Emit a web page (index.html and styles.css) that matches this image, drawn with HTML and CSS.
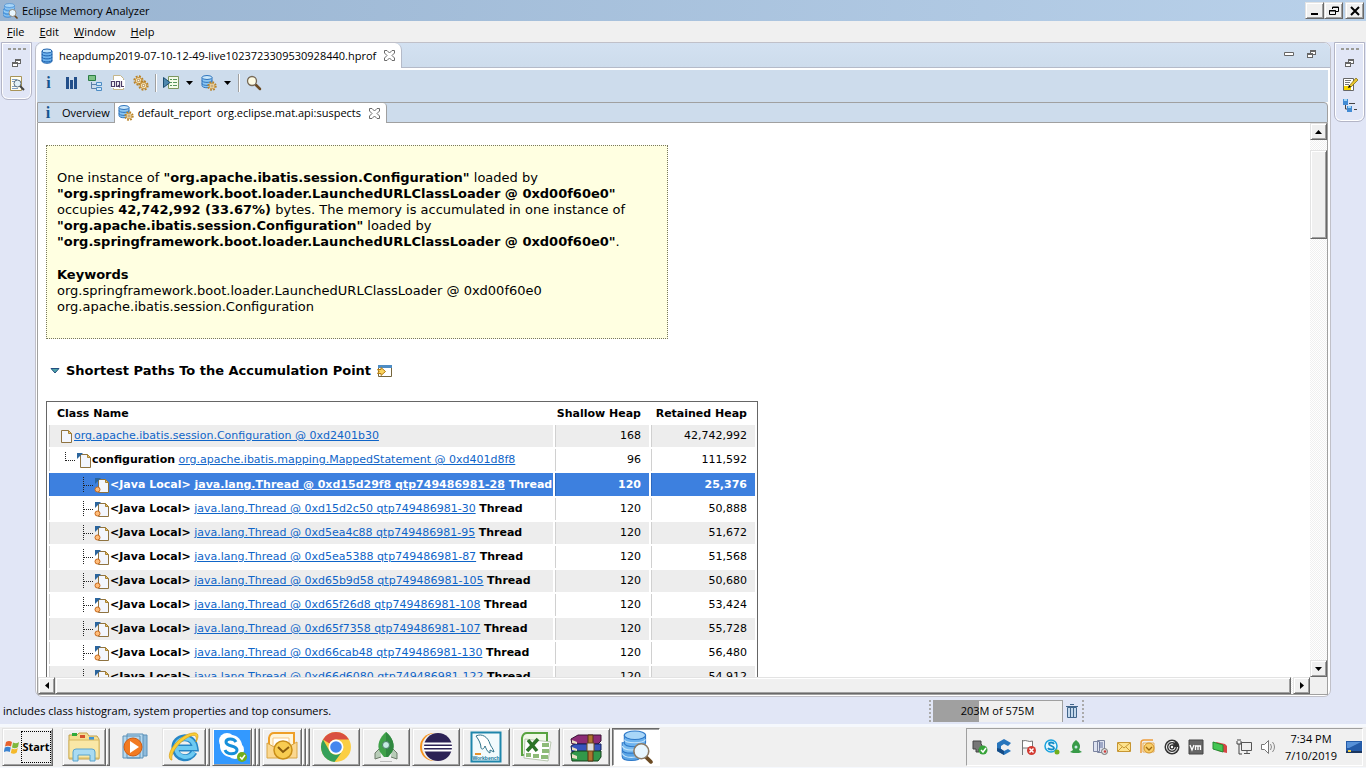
FILE: index.html
```html
<!DOCTYPE html>
<html lang="en">
  <head>
    <meta charset="utf-8" />
    <meta name="viewport" content="width=device-width, initial-scale=1.0" />
    <title>Eclipse Memory Analyzer</title>
    <link rel="stylesheet" href="styles.css" />
  </head>

  <body>
    <!-- shared icons -->
    <svg class="sprite" aria-hidden="true">
      <symbol id="i-db" viewBox="0 0 16 16">
        <path d="M3 3v10c0 3 10 3 10 0V3z" fill="#6db3ee" stroke="#1f62ad" />
        <ellipse cx="8" cy="3" rx="5" ry="2" fill="#b9e0fb" stroke="#1f62ad" />
        <path d="M3 6c0 2.500 10 2.500 10 0M3 9c0 2.500 10 2.500 10 0M3 12c0 2.500 10 2.500 10 0" fill="none" stroke="#1f62ad" />
      </symbol>
      <symbol id="i-gear" viewBox="0 0 16 16">
        <circle cx="8" cy="8" r="6" fill="none" stroke="#b98328" stroke-width="3" stroke-dasharray="2.700 2" />
        <circle cx="8" cy="8" r="4.500" fill="#fdecc0" stroke="#c99642" stroke-width="1.500" />
        <circle cx="8" cy="8" r="1.800" fill="#fff" stroke="#8a5a10" />
      </symbol>
      <symbol id="i-lens" viewBox="0 0 16 16">
        <path d="M10 10l4 4" stroke="#6b4a22" stroke-width="2.500" stroke-linecap="round" />
        <circle cx="6" cy="6" r="4.500" fill="#fdfbe4" stroke="#776a58" stroke-width="1.300" />
      </symbol>
      <symbol id="i-dbgear" viewBox="0 0 16 16">
        <path d="M1 2.500v8c0 3 10 3 10 0v-8z" fill="#8cc6f2" stroke="#2e74bd" />
        <ellipse cx="6" cy="2.500" rx="5" ry="2" fill="#cbe8fb" stroke="#2e74bd" />
        <path d="M1 5.500c0 2.500 10 2.500 10 0M1 8.500c0 2.500 10 2.500 10 0" fill="none" stroke="#2e74bd" />
        <use href="#i-gear" x="6" y="6" width="10" height="10" />
      </symbol>
      <symbol id="i-mat" viewBox="0 0 32 32">
        <path d="M3 19v6c0 5 17 5 17 0v-6z" fill="#5aa5e6" stroke="#2d78c8" />
        <path d="M3 12v6c0 5 17 5 17 0v-6z" fill="#79bbef" stroke="#2d78c8" />
        <path d="M5 5v7c0 5 20 5 20 0V5z" fill="#6db3ee" stroke="#2d78c8" />
        <ellipse cx="15" cy="5" rx="10" ry="4" fill="#a9d6f8" stroke="#2d78c8" />
        <path d="M5 9c1 4 18 4 20 0M3 15c2 5 15 5 17 0M3 22c2 5 15 5 17 0" fill="none" stroke="#c6e5fb" />
        <path d="M25 25l5 5" stroke="#6b4a22" stroke-width="3.500" stroke-linecap="round" />
        <circle cx="21" cy="20" r="7" fill="#e8f6fe" stroke="#8b7a64" stroke-width="1.500" />
      </symbol>
      <symbol id="i-restore" viewBox="0 0 9 8">
        <path d="M3 0h6v5H6v3H0V3h3z" fill="#666" />
        <path d="M4 2h4v2H6V3H4zM1 5h4v2H1z" fill="#fff" />
      </symbol>
      <symbol id="i-close" viewBox="0 0 11 11">
        <path d="M.5.5h2.500l2.500 2.500L8 .5h2.500V3L8 5.500 10.500 8v2.500H8L5.500 8 3 10.500H.5V8L3 5.500.5 3z" fill="#fff" stroke="#6b6b6b" />
      </symbol>
      <symbol id="i-tree" viewBox="0 0 16 16">
        <path d="M4.500 7v6.500H9M4.500 9.500H9" fill="none" stroke="#5d7fa8" />
        <path d="M1.500.5h7v5h-7z" fill="#7cc286" stroke="#2b7c44" />
        <path d="M9.500 7.500h5v3h-5zM9.500 12.500h5v3h-5z" fill="#cfe6fa" stroke="#4d8cc4" />
      </symbol>
      <symbol id="i-page" viewBox="0 0 16 16">
        <path d="M3.500 2.500h7l3 3v9h-10z" fill="#f3f6fd" stroke="#8f7340" />
        <path d="M10.500 2.500l3 3h-3z" fill="#e8c777" stroke="#a98232" />
      </symbol>
      <symbol id="i-ref" viewBox="0 0 16 16">
        <path d="M4.500 2.500h7l3 3v10h-10z" fill="#f3f6fd" stroke="#8f7340" />
        <path d="M11.500 2.500l3 3h-3z" fill="#e8c777" stroke="#a98232" />
        <path d="M1 1h6L1 7z" fill="#2b659d" />
      </symbol>
      <symbol id="i-local" viewBox="0 0 16 16">
        <use href="#i-ref" width="16" height="16" />
        <circle cx="3.500" cy="12.500" r="2.500" fill="#ffbd7a" stroke="#c8691b" />
      </symbol>
      <symbol id="i-branch" viewBox="0 0 18 16">
        <path d="M7.500 0v16M8 8.500h10" fill="none" stroke="#222" stroke-dasharray="1 1" />
      </symbol>
      <symbol id="i-elbow" viewBox="0 0 18 16">
        <path d="M7.500 0v9M8 8.500h10" fill="none" stroke="#222" stroke-dasharray="1 1" />
      </symbol>
    </svg>

    <header class="titlebar">
      <svg width="16" height="16"><use href="#i-mat" /></svg>
      <h1>Eclipse Memory Analyzer</h1>
      <div class="window-buttons">
        <button class="raised" aria-label="Minimize"><svg width="12" height="10"><path d="M2 7h7v2H2z" /></svg></button>
        <button class="raised" aria-label="Restore"><svg width="12" height="10" viewBox="0 0 12 10"><path d="M4.500 3V1h6v4.500H8M1.500 4.500h6v4h-6zM4 1.500h7M1 5h7" fill="none" stroke="#000" /></svg></button>
        <button class="raised close" aria-label="Close"><svg width="12" height="10"><path d="M2 1l8 8M10 1L2 9" stroke="#000" stroke-width="2" /></svg></button>
      </div>
    </header>

    <nav class="menubar">
      <a href="#"><u>F</u>ile</a>
      <a href="#"><u>E</u>dit</a>
      <a href="#"><u>W</u>indow</a>
      <a href="#"><u>H</u>elp</a>
    </nav>

    <main class="workbench">
      <aside class="trim trim-left">
        <span class="grip"></span>
        <button aria-label="Restore view"><svg width="9" height="8"><use href="#i-restore" /></svg></button>
        <button aria-label="Inspector">
          <svg width="16" height="16" viewBox="0 0 16 16">
            <path d="M1.500.5h11v14h-11z" fill="#fffef2" stroke="#a89458" />
            <path d="M3 3.500h5M3 5.500h3M3 10.500h3M3 12.500h6" stroke="#7f9fc4" />
            <circle cx="8.500" cy="7.500" r="3.500" fill="#e2f1f8" stroke="#5c6c7a" />
            <path d="M11 10l4 4" stroke="#444" stroke-width="2" />
          </svg>
        </button>
      </aside>

      <section class="editor">
        <div class="editor-tabs">
          <div class="editor-tab">
            <svg width="16" height="16"><use href="#i-db" /></svg>
            <span>heapdump2019-07-10-12-49-live1023723309530928440.hprof</span>
            <button aria-label="Close tab"><svg width="11" height="11"><use href="#i-close" /></svg></button>
          </div>
          <div class="editor-tools">
            <button aria-label="Minimize"><svg width="10" height="4"><path d="M.5.5h9v3h-9z" fill="#fff" stroke="#666" /></svg></button>
            <button aria-label="Restore"><svg width="9" height="8"><use href="#i-restore" /></svg></button>
          </div>
        </div>

        <div class="toolbar">
          <button class="info" aria-label="Overview">i</button>
          <button aria-label="Histogram"><svg width="16" height="16"><path d="M2 2h3v12H2zM6 5h3v9H6zM10 2h3v12h-3z" fill="#234f8a" /></svg></button>
          <button aria-label="Dominator tree"><svg width="16" height="16"><use href="#i-tree" /></svg></button>
          <button aria-label="OQL">
            <svg width="16" height="16" viewBox="0 0 16 16">
              <path d="M3.500.5h7l3 3v11h-10z" fill="#fff" stroke="#c5b68a" />
              <path d="M1 5h14v8H1z" fill="#fff" />
              <path d="M1.500 6.500h3v5h-3zM6.500 6.500h3v5h-3zM8 10l2 2.500M11.500 6v5.500H14" fill="none" stroke="#4d3d66" stroke-width="1.200" />
            </svg>
          </button>
          <button aria-label="Thread overview"><svg width="16" height="16"><use href="#i-gear" width="11" height="11" /><use href="#i-gear" x="5" y="5" width="11" height="11" /></svg></button>
          <span class="separator"></span>
          <button aria-label="Run report">
            <svg width="16" height="16" viewBox="0 0 16 16">
              <path d="M5.500 1.500h10v12h-10z" fill="#f4fbe8" stroke="#7d9660" />
              <path d="M7 4.500h2M10 4.500h4M7 7.500h2M10 7.500h4M7 10.500h2M10 10.500h4" stroke="#57965c" />
              <path d="M.5 2.500v10L7 7.500z" fill="#4e88ae" stroke="#1c4d70" />
            </svg>
          </button>
          <button class="drop" aria-label="Reports menu"><svg width="8" height="4"><path d="M0 0h7L3.500 4z" /></svg></button>
          <button aria-label="Query browser"><svg width="16" height="16"><use href="#i-dbgear" /></svg></button>
          <button class="drop" aria-label="Queries menu"><svg width="8" height="4"><path d="M0 0h7L3.500 4z" /></svg></button>
          <span class="separator"></span>
          <button aria-label="Find object"><svg width="16" height="16"><use href="#i-lens" /></svg></button>
        </div>

        <div class="page-tabs">
          <button class="page-tab"><b class="info">i</b><span>Overview</span></button>
          <div class="page-tab active">
            <svg width="16" height="16"><use href="#i-dbgear" /></svg>
            <span>default_report&nbsp; org.eclipse.mat.api:suspects</span>
            <button aria-label="Close page"><svg width="11" height="11"><use href="#i-close" /></svg></button>
          </div>
        </div>

        <div class="browser">
          <article class="report">
            <div class="suspect">
              <p>
                One instance of <b>"org.apache.ibatis.session.Configuration"</b> loaded by<br />
                <b>"org.springframework.boot.loader.LaunchedURLClassLoader @ 0xd00f60e0"</b><br />
                occupies <b>42,742,992 (33.67%)</b> bytes. The memory is accumulated in one instance of<br />
                <b>"org.apache.ibatis.session.Configuration"</b> loaded by<br />
                <b>"org.springframework.boot.loader.LaunchedURLClassLoader @ 0xd00f60e0"</b>.
              </p>
              <p>
                <b>Keywords</b><br />
                org.springframework.boot.loader.LaunchedURLClassLoader @ 0xd00f60e0<br />
                org.apache.ibatis.session.Configuration
              </p>
            </div>

            <h2>
              <svg width="10" height="6"><path d="M1 .5h8L5 5z" fill="#4ba3a8" stroke="#234f80" /></svg>
              <span>Shortest Paths To the Accumulation Point</span>
              <svg width="16" height="14" viewBox="0 0 16 14">
                <path d="M1.500 1.500h13v11h-13z" fill="#fff" stroke="#75653c" />
                <path d="M1 1h14v3H1z" fill="#4d8cc4" />
                <path d="M.5 5.500H4v-2l4.500 4L4 11.500v-2H.5l1.500-2z" fill="#fbd35c" stroke="#b27b14" />
              </svg>
            </h2>

            <table class="paths">
              <thead>
                <tr><th>Class Name</th><th class="num">Shallow Heap</th><th class="num">Retained Heap</th></tr>
              </thead>
              <tbody>
                <tr>
                  <td><div class="node"><svg width="16" height="16"><use href="#i-page" /></svg><span><a href="#">org.apache.ibatis.session.Configuration @ 0xd2401b30</a></span></div></td>
                  <td class="num">168</td><td class="num">42,742,992</td>
                </tr>
                <tr>
                  <td><div class="node"><svg width="18" height="16"><use href="#i-elbow" /></svg><svg width="16" height="16"><use href="#i-ref" /></svg><span><b>configuration</b> <a href="#">org.apache.ibatis.mapping.MappedStatement @ 0xd401d8f8</a></span></div></td>
                  <td class="num">96</td><td class="num">111,592</td>
                </tr>
                <tr class="selected">
                  <td><div class="node local"><svg width="18" height="16"><use href="#i-branch" /></svg><svg width="16" height="16"><use href="#i-local" /></svg><span><b>&lt;Java Local&gt;</b> <a href="#">java.lang.Thread @ 0xd15d29f8 qtp749486981-28</a> <b>Thread</b></span></div></td>
                  <td class="num">120</td><td class="num">25,376</td>
                </tr>
                <tr>
                  <td><div class="node local"><svg width="18" height="16"><use href="#i-branch" /></svg><svg width="16" height="16"><use href="#i-local" /></svg><span><b>&lt;Java Local&gt;</b> <a href="#">java.lang.Thread @ 0xd15d2c50 qtp749486981-30</a> <b>Thread</b></span></div></td>
                  <td class="num">120</td><td class="num">50,888</td>
                </tr>
                <tr>
                  <td><div class="node local"><svg width="18" height="16"><use href="#i-branch" /></svg><svg width="16" height="16"><use href="#i-local" /></svg><span><b>&lt;Java Local&gt;</b> <a href="#">java.lang.Thread @ 0xd5ea4c88 qtp749486981-95</a> <b>Thread</b></span></div></td>
                  <td class="num">120</td><td class="num">51,672</td>
                </tr>
                <tr>
                  <td><div class="node local"><svg width="18" height="16"><use href="#i-branch" /></svg><svg width="16" height="16"><use href="#i-local" /></svg><span><b>&lt;Java Local&gt;</b> <a href="#">java.lang.Thread @ 0xd5ea5388 qtp749486981-87</a> <b>Thread</b></span></div></td>
                  <td class="num">120</td><td class="num">51,568</td>
                </tr>
                <tr>
                  <td><div class="node local"><svg width="18" height="16"><use href="#i-branch" /></svg><svg width="16" height="16"><use href="#i-local" /></svg><span><b>&lt;Java Local&gt;</b> <a href="#">java.lang.Thread @ 0xd65b9d58 qtp749486981-105</a> <b>Thread</b></span></div></td>
                  <td class="num">120</td><td class="num">50,680</td>
                </tr>
                <tr>
                  <td><div class="node local"><svg width="18" height="16"><use href="#i-branch" /></svg><svg width="16" height="16"><use href="#i-local" /></svg><span><b>&lt;Java Local&gt;</b> <a href="#">java.lang.Thread @ 0xd65f26d8 qtp749486981-108</a> <b>Thread</b></span></div></td>
                  <td class="num">120</td><td class="num">53,424</td>
                </tr>
                <tr>
                  <td><div class="node local"><svg width="18" height="16"><use href="#i-branch" /></svg><svg width="16" height="16"><use href="#i-local" /></svg><span><b>&lt;Java Local&gt;</b> <a href="#">java.lang.Thread @ 0xd65f7358 qtp749486981-107</a> <b>Thread</b></span></div></td>
                  <td class="num">120</td><td class="num">55,728</td>
                </tr>
                <tr>
                  <td><div class="node local"><svg width="18" height="16"><use href="#i-branch" /></svg><svg width="16" height="16"><use href="#i-local" /></svg><span><b>&lt;Java Local&gt;</b> <a href="#">java.lang.Thread @ 0xd66cab48 qtp749486981-130</a> <b>Thread</b></span></div></td>
                  <td class="num">120</td><td class="num">56,480</td>
                </tr>
                <tr>
                  <td><div class="node local"><svg width="18" height="16"><use href="#i-branch" /></svg><svg width="16" height="16"><use href="#i-local" /></svg><span><b>&lt;Java Local&gt;</b> <a href="#">java.lang.Thread @ 0xd66d6080 qtp749486981-122</a> <b>Thread</b></span></div></td>
                  <td class="num">120</td><td class="num">54,912</td>
                </tr>
              </tbody>
            </table>
          </article>

          <div class="scroll vertical">
            <button class="raised" aria-label="Scroll up"><svg width="8" height="4"><path d="M0 4h7L3.500 0z" /></svg></button>
            <div class="raised thumb"></div>
            <button class="raised end" aria-label="Scroll down"><svg width="8" height="4"><path d="M0 0h7L3.500 4z" /></svg></button>
          </div>
          <div class="scroll horizontal">
            <button class="raised" aria-label="Scroll left"><svg width="4" height="8"><path d="M4 0v7L0 3.500z" /></svg></button>
            <div class="raised thumb"></div>
            <button class="raised end" aria-label="Scroll right"><svg width="4" height="8"><path d="M0 0v7l4-3.500z" /></svg></button>
          </div>
          <div class="corner"></div>
        </div>
      </section>

      <aside class="trim trim-right">
        <span class="grip"></span>
        <button aria-label="Restore view"><svg width="9" height="8"><use href="#i-restore" /></svg></button>
        <button aria-label="Notes">
          <svg width="16" height="16" viewBox="0 0 16 16">
            <path d="M1.500 2.500h10v12h-10z" fill="#fff" stroke="#666" />
            <path d="M3 4.500h6M3 6.500h5M3 8.500h4" stroke="#777" />
            <path d="M2 10h7v4H2z" fill="#f5d400" />
            <path d="M7 10l7-8 2 2-7 7z" fill="#e8c62e" stroke="#7a6410" stroke-width=".7" />
            <path d="M6 12l1-3 2 2z" />
          </svg>
        </button>
        <button aria-label="Navigation history">
          <svg width="16" height="16" viewBox="0 0 16 16">
            <path d="M3.500 7v4H6" fill="none" stroke="#444" />
            <path d="M1 1h5v6H1zM5 8h5v6H5z" fill="#438bd4" />
            <path d="M2 1h3v2H2zM6 8h3v2H6z" fill="#9fd6f5" />
            <path d="M7 5.500h6M12 11.500h3" stroke="#444" />
          </svg>
        </button>
      </aside>
    </main>

    <footer class="statusline">
      <span class="message">includes class histogram, system properties and top consumers.</span>
      <div class="heap">
        <div class="heap-meter">
          <div class="heap-used" style="width: 36%"></div>
          <span>203M of 575M</span>
        </div>
        <button aria-label="Run garbage collector">
          <svg width="12" height="16" viewBox="0 0 12 16">
            <path d="M1.500 4.500h9v10h-9z" fill="#c4d8ec" stroke="#42668c" />
            <path d="M0 3.500h12M4 1.500h4M4.500 5v9M7.500 5v9" stroke="#42668c" />
          </svg>
        </button>
      </div>
    </footer>

    <div class="taskbar">
      <button class="start raised">
        <svg width="16" height="16" viewBox="0 0 16 16">
          <path d="M2 3c2-1.500 4-1.500 6 0L7 7.500c-2-1-4-1-6 0z" fill="#e8622c" />
          <path d="M9 3.500c2 1 4 1 6-.5l-1 5c-2 1.500-4 1.500-6 .5z" fill="#7fb83c" />
          <path d="M.8 8.500c2-1 4-1 6 0l-1 4.500c-2-1-4-1-6 0z" fill="#3b83d0" />
          <path d="M7.800 9.500c2 1 4 1 6-.5l-1 4.500c-2 1.500-4 1.500-6 .5z" fill="#f4b92b" />
        </svg>
        <span>Start</span>
      </button>

      <div class="tasks">
        <div class="task">
          <button class="raised" aria-label="Explorer">
            <svg width="34" height="34" viewBox="0 0 34 34">
              <path d="M2 5h8l2-2h8l2 3h8l2 3v20H2z" fill="#f4de91" stroke="#c3a04b" />
              <path d="M5 3h5v3H5z" fill="#2faa3b" /><path d="M13 5h5v3h-5z" fill="#d4512a" /><path d="M22 7h5v3h-5z" fill="#3d94d8" />
              <path d="M2 10h30v18H2z" fill="#f9e7a6" stroke="#d6b860" />
              <path d="M6 31v-9q0-3 3-3h16q3 0 3 3v9h-5v-6H11v6z" fill="#a9dbf2" stroke="#5ba4cd" />
            </svg>
          </button>
          <i class="edge"></i>
        </div>
        <div class="task flat">
          <button aria-label="Media Player">
            <svg width="30" height="30" viewBox="0 0 30 30">
              <path d="M10 3h16v21H10z" fill="#8fbbdb" stroke="#5d91b8" />
              <path d="M6 2h16v24H6zM2 4h17v22H2z" fill="#b6d8ee" stroke="#5d91b8" />
              <circle cx="12" cy="15" r="9" fill="#f27a21" stroke="#d35b10" />
              <path d="M9 9l9 6-9 6z" fill="#fff" />
            </svg>
          </button>
        </div>
        <div class="task">
          <button class="raised" aria-label="Internet Explorer">
            <svg width="34" height="34" viewBox="0 0 34 34">
              <path d="M27 22c-5 9-18 7-19-4-1-12 18-15 20 0H10" fill="none" stroke="#2786c5" stroke-width="7" />
              <path d="M27 22c-5 8-17 6-18-4-1-11 17-14 19 0H10" fill="none" stroke="#6dcaf2" stroke-width="4" />
              <path d="M4 30C-3 24 13 4 26 3c6-1 6 4 3 9 1-5 0-8-5-6C15 9 3 22 5 30z" fill="#f9cd34" stroke="#d99e16" stroke-width=".7" />
            </svg>
          </button>
          <i class="edge"></i>
        </div>
        <div class="task">
          <button class="raised skype" aria-label="Skype">
            <svg width="34" height="34" viewBox="0 0 34 34">
              <circle cx="12" cy="11" r="8" fill="#fff" /><circle cx="20" cy="20" r="9" fill="#fff" /><circle cx="16" cy="16" r="11" fill="#fff" />
              <path d="M21 12c-2-4-10-4-10 0 0 5 11 3 11 8 0 5-10 5-12 0" fill="none" stroke="#168fda" stroke-width="3" />
              <circle cx="27" cy="27" r="5" fill="#71ae1c" /><path d="M25 27l2 2 3-4" fill="none" stroke="#fff" stroke-width="1.500" />
            </svg>
          </button>
          <i class="edge"></i><i class="edge"></i>
        </div>
        <div class="task">
          <button class="raised" aria-label="Outlook">
            <svg width="34" height="34" viewBox="0 0 34 34">
              <path d="M4 8q1-5 5-5h20v20H4z" fill="#fff5da" stroke="#ee9f28" stroke-width="2" />
              <path d="M8 8h16v10H8z" fill="#fff" stroke="#f5c987" />
              <path d="M2 13l14 8 16-9v16H2z" fill="#fbd890" stroke="#d8a545" />
              <circle cx="18" cy="20" r="9" fill="#f8cc51" stroke="#c98f19" stroke-width="1.500" />
              <path d="M13 17l5 5 6-5" fill="none" stroke="#8a5c0d" stroke-width="2" />
            </svg>
          </button>
          <i class="edge"></i><i class="edge"></i>
        </div>
        <div class="task">
          <button class="raised" aria-label="Chrome">
            <svg width="32" height="32" viewBox="0 0 32 32">
              <circle cx="16" cy="16" r="15" fill="#fbce43" />
              <path d="M3 8.500A15 15 0 0 1 29 8.500H16a7.500 7.500 0 0 0-6.500 4z" fill="#d94f40" />
              <path d="M3 8.500A15 15 0 0 0 14.500 31L22.500 20a7.500 7.500 0 0 1-13 0z" fill="#35a05a" />
              <circle cx="16" cy="16" r="7.500" fill="#fff" /><circle cx="16" cy="16" r="5.800" fill="#4587ee" />
            </svg>
          </button>
        </div>
        <div class="task">
          <button class="raised" aria-label="Rocket">
            <svg width="32" height="32" viewBox="0 0 32 32">
              <path d="M10 17l-5 5v6l6-2M22 17l5 5v6l-6-2" fill="#b8ccb8" stroke="#6d7c6a" />
              <path d="M16 1c6 5 10 13 6 20l-4 5h-4l-4-5C6 14 10 6 16 1z" fill="#3fa149" />
              <path d="M16 1c6 5 10 13 6 20l-4 5h-2z" fill="#308840" />
              <circle cx="16" cy="14" r="3.500" fill="#c5ebe2" stroke="#4a7b68" />
              <path d="M10 30.500h12" stroke="#bbb" />
            </svg>
          </button>
        </div>
        <div class="task">
          <button class="raised" aria-label="Eclipse">
            <svg width="34" height="32" viewBox="0 0 34 32">
              <circle cx="15" cy="16" r="14" fill="#f7941e" /><circle cx="17" cy="16" r="14" fill="#f0f0f0" /><circle cx="19" cy="16" r="14" fill="#2c2255" />
              <path d="M5 12.500h28M5 16h28M5 19.500h28" stroke="#fff" stroke-width="2" />
            </svg>
          </button>
        </div>
        <div class="task">
          <button class="raised" aria-label="MySQL Workbench">
            <svg width="32" height="32" viewBox="0 0 32 32">
              <path d="M1.500 1.500h29v29h-29z" fill="#f2fafc" stroke="#1e86ab" stroke-width="2" />
              <path d="M6 5c6-3 12 1 14 8 1 3 3 4 4 8l-4-2 0 3c-3-1-4-5-5-7-1 3-3 4-4 2 0-4-2-8-5-12z" fill="#fff" stroke="#32748b" />
              <path d="M5 23h6" stroke="#e8912b" stroke-width="2" />
              <text x="16" y="29" text-anchor="middle" class="workbench-label">Workbench</text>
            </svg>
          </button>
        </div>
        <div class="task">
          <button class="raised" aria-label="Excel">
            <svg width="34" height="32" viewBox="0 0 34 32">
              <path d="M3 7q1-5 5-5h20v22H3z" fill="#eff8e7" stroke="#58a340" stroke-width="2" />
              <path d="M6 8l26 3-3 19-24-3z" fill="#fff" stroke="#b8c7b0" />
              <path d="M23 12h7v4h-7zM23 18h7v4h-7zM22 24h7v4h-7zM14 23h6v4h-6zM7 22h5v4H7z" fill="#8ebb78" />
              <path d="M9 9l9 11M19 8L8 20" stroke="#2c7428" stroke-width="3.500" />
            </svg>
          </button>
        </div>
        <div class="task">
          <button class="raised" aria-label="WinRAR">
            <svg width="34" height="32" viewBox="0 0 34 32">
              <path d="M2 8l7-4h23v6l-3 3H3z" fill="#8d2c75" stroke="#381334" /><path d="M2 15l4-2h26v6l-3 2H3z" fill="#3553bd" stroke="#151f58" /><path d="M2 22l4-2h26v6l-3 4H3z" fill="#32984a" stroke="#123f19" />
              <path d="M3 9l5 2v2l-5-1zM3 16l5 2v2l-5-1zM3 23l5 2v3l-5-1z" fill="#e9dfc4" />
              <path d="M19 4h5v26h-5z" fill="#b07330" stroke="#553313" /><path d="M18 12h7v8h-7z" fill="#ddd" stroke="#6c4a20" />
            </svg>
          </button>
        </div>
        <div class="task">
          <button class="pressed" aria-label="Eclipse Memory Analyzer"><svg width="34" height="34"><use href="#i-mat" /></svg></button>
        </div>
      </div>

      <div class="tray">
        <svg width="16" height="16" viewBox="0 0 16 16"><path d="M1 2h8v3l1 1v4H7v3H4v-3H1z" fill="#777" stroke="#444" /><circle cx="11" cy="11" r="4.500" fill="#37a33a" /><path d="M9 11l2 2 3-4" fill="none" stroke="#fff" stroke-width="1.500" /></svg>
        <svg width="16" height="16" viewBox="0 0 16 16"><path d="M8 0l7 4-3 3-4-2-3 2v3l3 2 4-2 3 2-7 4-7-4V4z" fill="#2775bc" /><path d="M1 9l4 1 3 2v4l-7-4z" fill="#154c86" /></svg>
        <svg width="16" height="16" viewBox="0 0 16 16"><path d="M2.500 1v15M2.500 2q3-1 5 0t5 0v7H3" fill="#fff" stroke="#777" /><circle cx="11.500" cy="11.500" r="4.500" fill="#d23a32" /><path d="M9.500 9.500l4 4m0-4l-4 4" stroke="#fff" stroke-width="1.500" /></svg>
        <svg width="16" height="16" viewBox="0 0 16 16"><circle cx="7" cy="7" r="6" fill="#e6f6fd" stroke="#17a2dd" stroke-width="1.500" /><path d="M10 5c-1-2-5-2-5 0s5 2 5 4-5 2-6 0" fill="none" stroke="#138bc5" stroke-width="1.800" /><circle cx="13" cy="13" r="2.500" fill="#71ae1c" /></svg>
        <svg width="16" height="16" viewBox="0 0 16 16"><path d="M8 1c4 3 5 6 3 10l3 2-3 1H5l-3-1 3-2C3 7 4 4 8 1z" fill="#389b48" /><circle cx="8" cy="8" r="1.500" fill="#c5ebe2" /></svg>
        <svg width="16" height="16" viewBox="0 0 16 16"><path d="M1.500 2.500h6v10h-6zM5.500 1.500h7v12h-7z" fill="#dde2f0" stroke="#7b84a0" /><path d="M7 4h4M7 6h4M7 8h4" stroke="#63709e" /><circle cx="12.500" cy="12.500" r="3" fill="#ddd" stroke="#777" /><circle cx="13" cy="12.500" r="1.200" fill="#ce3b3b" /></svg>
        <svg width="16" height="16" viewBox="0 0 16 16"><path d="M1.500 3.500h13v9h-13z" fill="#fde38e" stroke="#c79632" /><path d="M2 4l6 5 6-5M2 12l4-4M14 12l-4-4" fill="none" stroke="#c79632" /></svg>
        <svg width="16" height="16" viewBox="0 0 16 16"><path d="M1 14V4q0-3 3-3h9" fill="none" stroke="#ed9c3a" stroke-width="1.500" /><path d="M3 4h11v9H3z" fill="#fff0cd" stroke="#e0ac60" /><circle cx="9" cy="9" r="5" fill="#f9ce69" stroke="#d39327" /><path d="M6 8l3 3 3-3" fill="none" stroke="#9b6812" stroke-width="1.300" /></svg>
        <svg width="16" height="16" viewBox="0 0 16 16"><circle cx="8" cy="8" r="7.500" fill="#333" /><circle cx="8" cy="8" r="5.500" fill="none" stroke="#fff" stroke-dasharray="28 7" /><circle cx="8" cy="8" r="3.200" fill="none" stroke="#fff" stroke-dasharray="16 4" /><circle cx="8" cy="8" r="1.200" fill="#fff" /></svg>
        <svg width="16" height="16" viewBox="0 0 16 16"><path d="M1 1h14v14H1z" fill="#666" stroke="#444" /><path d="M2 6l2 5 2-5M7.500 11V7h5v4M10 7v4" fill="none" stroke="#fff" stroke-width="1.300" /></svg>
        <svg width="16" height="16" viewBox="0 0 16 16"><path d="M4 3l9 2 2 2v7l-9-2z" fill="#d64545" /><path d="M1 3l10 3v7L1 10z" fill="#44c653" stroke="#238b31" /></svg>
        <svg width="16" height="16" viewBox="0 0 16 16"><path d="M5.500 3.500h10v8h-10zM8 14.500h6M11 12v2" fill="#eee" stroke="#555" /><path d="M1 2v3h4V2M3 5v10h3M2 0v2M4 0v2" fill="none" stroke="#444" /></svg>
        <svg width="16" height="16" viewBox="0 0 16 16"><path d="M1.500 5.500h3l4-4v13l-4-4h-3z" fill="#fff" stroke="#777" /><path d="M10.500 5q2 3 0 6M12.500 3q4 5 0 10" fill="none" stroke="#888" /></svg>
        <time class="clock">7:34 PM<br />7/10/2019</time>
        <button aria-label="Show desktop"><svg width="16" height="14" viewBox="0 0 16 14"><path d="M0 1h16v11H0z" fill="#245ba8" /><path d="M1 2h14L3 8H1z" fill="#5791d8" /><path d="M0 11h16v2H0z" fill="#1a365f" /><path d="M2 10h3v2H2z" fill="#f2cf4a" /></svg></button>
      </div>
    </div>
  </body>
</html>
```

FILE: styles.css
```css
* {
  box-sizing: border-box;
}

body {
  margin: 0;
  height: 100vh;
  display: flex;
  flex-direction: column;
  overflow: hidden;
  background: #e1e6f6;
  color: #000;
  font-family: "Open Sans", "Noto Sans", sans-serif;
  font-size: 11px;
  line-height: 16px;
}

button {
  display: flex;
  align-items: center;
  justify-content: center;
  margin: 0;
  padding: 0;
  border: 0;
  background: none;
  color: inherit;
  font: inherit;
}

svg {
  display: block;
  flex: none;
}

.sprite {
  position: absolute;
  width: 0;
  height: 0;
}

/* classic 3d edge */
.raised {
  background: #f0f0f0;
  border: 1px solid;
  border-color: #e3e3e3 #696969 #696969 #e3e3e3;
  box-shadow: inset 1px 1px #fff, inset -1px -1px #a0a0a0;
}

/* title and menu */
.titlebar {
  display: flex;
  align-items: center;
  gap: 4px;
  height: 21px;
  padding: 0 2px;
  background: linear-gradient(90deg, #99b4d1, #b9d1ea);
}

.titlebar h1 {
  flex: 1;
  margin: 0;
  font-size: 11px;
  font-weight: normal;
}

.window-buttons {
  display: flex;
}

.window-buttons button {
  width: 19px;
  height: 17px;
}

.window-buttons .close {
  margin-left: 2px;
}

.menubar {
  display: flex;
  align-items: center;
  gap: 15px;
  height: 21px;
  padding: 0 7px;
  background: #f0f0f0;
}

.menubar a {
  color: #000;
  text-decoration: none;
}

/* workbench */
.workbench {
  flex: 1;
  min-height: 0;
  display: flex;
  align-items: flex-start;
  gap: 3px;
  padding: 0 1px;
}

.trim {
  flex: none;
  display: flex;
  flex-direction: column;
  align-items: center;
  width: 31px;
  padding: 5px 0 4px;
  border: 1px solid #b3b5c6;
  border-radius: 0 0 7px 7px;
  box-shadow: inset 0 0 0 1px #fff;
}

.trim button {
  width: 22px;
  height: 22px;
}

.trim button:nth-of-type(1) {
  height: 20px;
}

.grip {
  width: 18px;
  height: 2px;
  margin-bottom: 3px;
  background: repeating-linear-gradient(90deg, #9a9a94 0 3px, transparent 3px 5px);
}

.editor {
  flex: 1;
  align-self: stretch;
  min-width: 0;
  display: flex;
  flex-direction: column;
  padding: 0 2px 1px 1px;
  border: 1px solid #c0c0c8;
  border-radius: 7px;
  background: #fff;
  overflow: hidden;
}

.editor-tabs {
  display: flex;
  justify-content: space-between;
  height: 25px;
  margin: 0 -2px 2px -1px;
  border-bottom: 1px solid #b4bac8;
  background: linear-gradient(#d3e1f1, #cddcec);
}

.editor-tab {
  display: flex;
  align-items: center;
  gap: 4px;
  height: 25px;
  padding: 0 6px 0 3px;
  border-right: 1px solid #b4bac8;
  border-radius: 7px 7px 0 0;
  background: #fff;
}

.editor-tab button,
.page-tab button {
  margin-left: 4px;
}

.editor-tools {
  display: flex;
  align-items: center;
  gap: 13px;
  padding: 0 14px 3px 0;
}

.toolbar {
  display: flex;
  align-items: center;
  height: 32px;
  flex: none;
  padding-bottom: 6px;
  background: #cddcec;
}

.toolbar button {
  width: 23px;
  height: 22px;
}

.toolbar .drop {
  width: 15px;
}

.info,
.toolbar .info {
  width: 20px;
  color: #14558f;
  font: bold 16px/16px "Liberation Serif", serif;
}

.toolbar .info {
  width: 23px;
}

.separator {
  width: 1px;
  height: 18px;
  margin: 0 3px;
  background: #a0a0a0;
  box-shadow: 1px 0 #fff;
}

.page-tabs {
  display: flex;
  flex: none;
  height: 21px;
  border: 1px solid #a0a0a0;
  border-radius: 0 4px 0 0;
  background: #cddcec;
}

.page-tab {
  display: flex;
  align-items: center;
  gap: 4px;
  padding: 0 4px 0 0;
  border-right: 1px solid #a0a0a0;
}

.page-tab.active {
  height: 20px;
  padding: 0 6px 0 3px;
  border-radius: 0 4px 0 0;
  background: #fff;
}

/* report page */
.browser {
  flex: 1;
  min-height: 0;
  display: grid;
  grid-template: minmax(0, 1fr) 17px / minmax(0, 1fr) 17px;
  border: 1px solid #a0a0a0;
  border-top: 0;
}

.report {
  overflow: hidden;
  padding: 22px 8px 0;
  font-family: "DejaVu Sans", sans-serif;
}

.suspect {
  width: 622px;
  padding: 24px 10px 23px;
  border: 1px dotted #77775f;
  background: #ffffe1;
  font-size: 13px;
  line-height: 16px;
  white-space: nowrap;
}

.suspect p {
  margin: 0;
}

.suspect p + p {
  margin-top: 17px;
}

.report h2 {
  display: flex;
  align-items: center;
  gap: 6px;
  margin: 22px 0 20px;
  padding-left: 4px;
  font-size: 13px;
  line-height: 20px;
}

.paths {
  width: 712px;
  table-layout: fixed;
  border: 1px solid #666;
  border-collapse: separate;
  border-spacing: 2px;
  font-size: 11px;
  line-height: 14px;
}

.paths th {
  height: 19px;
  padding: 0 8px;
  text-align: left;
  white-space: nowrap;
}

.paths .num {
  width: 94px;
  padding-left: 0;
  text-align: right;
}

.paths .num + .num {
  width: 104px;
}

.paths td {
  height: 22px;
  padding: 0 8px;
  border-left: 1px solid #d0d0d0;
  white-space: nowrap;
}

.paths tbody tr:nth-child(odd) td {
  background: #ededed;
}

.paths tbody .selected td,
.paths tbody .selected:nth-child(odd) td {
  height: 23px;
  border-left-color: #2c67bd;
  background: #3d80df;
  color: #fff;
  font-weight: bold;
}

.paths a {
  color: #0f65c8;
}

.paths .selected a {
  color: #fff;
}

.node {
  display: flex;
  align-items: center;
}

.node.local {
  padding-left: 18px;
}

/* scroll bars */
.scroll {
  display: flex;
  background: repeating-conic-gradient(#f0f0f0 0 25%, #fff 0 50%) 0 0 / 2px 2px;
}

.scroll button {
  flex: none;
  width: 17px;
  height: 17px;
}

.scroll.vertical {
  flex-direction: column;
}

.scroll.vertical .thumb {
  height: 16%;
  margin-top: 10px;
}

.scroll.horizontal .thumb {
  flex: 1;
  margin-right: 2px;
}

.scroll.vertical .end {
  margin-top: auto;
}

.corner {
  background: #f0f0f0;
}

/* status line */
.statusline {
  display: flex;
  flex: none;
  align-items: center;
  height: 27px;
  padding-left: 3px;
}

.message {
  flex: 1;
}

.heap {
  display: flex;
  height: 22px;
  margin-right: 282px;
  padding: 0 2px;
  border: dotted #aaa;
  border-width: 0 2px;
}

.heap-meter {
  position: relative;
  width: 130px;
  border: 1px solid #a0a0a0;
  border-width: 1px 1px 0 0;
  background: #f0f0f0;
  line-height: 20px;
  text-align: center;
}

.heap-used {
  position: absolute;
  top: 0;
  bottom: 0;
  left: 0;
  background: #a0a0a0;
}

.heap-meter span {
  position: relative;
}

.heap button {
  width: 17px;
}

/* taskbar */
.taskbar {
  display: flex;
  flex: none;
  align-items: center;
  gap: 9px;
  height: 44px;
  padding: 0 3px 0 2px;
  border: solid #f5f8fd;
  border-width: 3px 0 1px;
  background: #f0f0f0;
}

.start {
  gap: 1px;
  width: 51px;
  height: 38px;
  font-weight: bold;
}

.start span {
  width: 30px;
  border: 1px dotted #000;
  line-height: 30px;
}

.tasks {
  flex: 1;
  display: flex;
  gap: 2px;
}

.task {
  display: flex;
  width: 48px;
  height: 38px;
}

.task button {
  flex: 1;
  min-width: 0;
}

.task .skype {
  background: #3399ff;
}

.edge {
  width: 4px;
  border: 1px solid;
  border-color: #e3e3e3 #696969 #696969 #fff;
  box-shadow: inset -1px -1px #a0a0a0;
}

.pressed {
  border: 1px solid;
  border-color: #696969 #fff #fff #696969;
  background: #fff;
  box-shadow: inset 1px 1px #a0a0a0;
}

.workbench-label {
  fill: #16789b;
  font: bold 5px "Liberation Sans", sans-serif;
}

.tray {
  display: flex;
  align-items: center;
  gap: 8px;
  height: 38px;
  padding-left: 5px;
  border: 1px solid #a0a0a0;
  border-color: #a0a0a0 #fff #fff #a0a0a0;
}

.clock {
  width: 54px;
  line-height: 17px;
  text-align: center;
}
```
